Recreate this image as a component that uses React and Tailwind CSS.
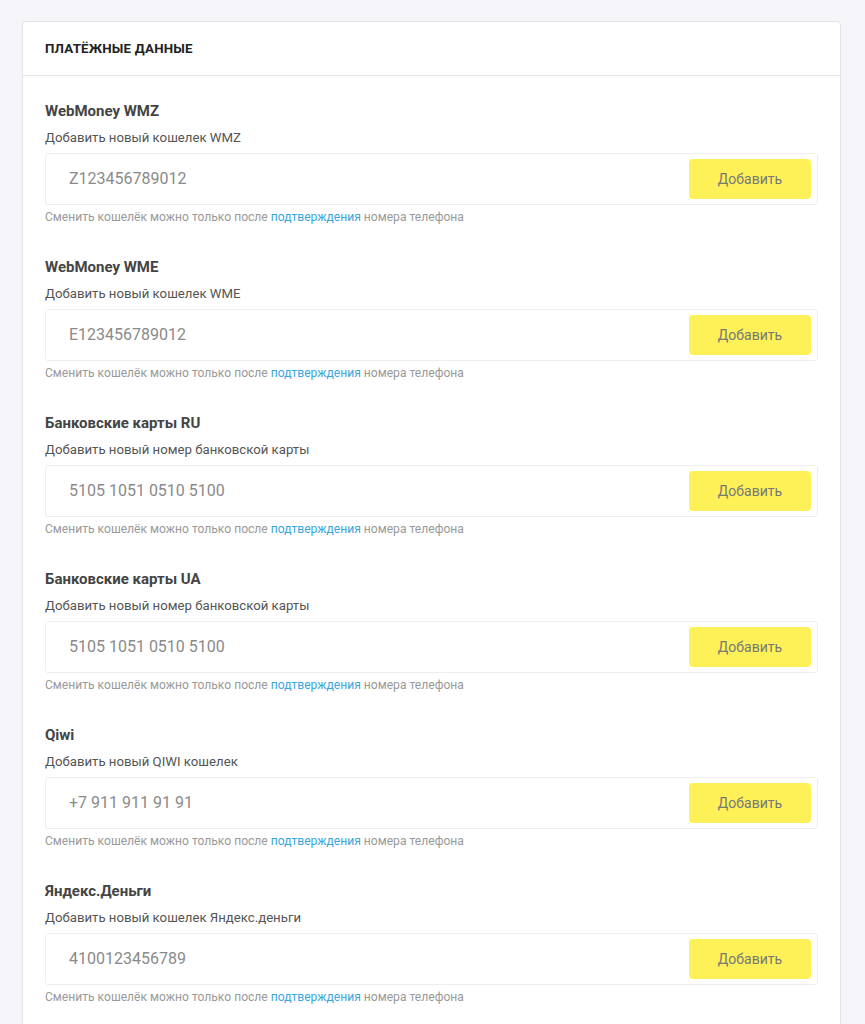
const wallets = [
  { title: 'WebMoney WMZ', label: 'Добавить новый кошелек WMZ', placeholder: 'Z123456789012' },
  { title: 'WebMoney WME', label: 'Добавить новый кошелек WME', placeholder: 'E123456789012' },
  { title: 'Банковские карты RU', label: 'Добавить новый номер банковской карты', placeholder: '5105 1051 0510 5100' },
  { title: 'Банковские карты UA', label: 'Добавить новый номер банковской карты', placeholder: '5105 1051 0510 5100' },
  { title: 'Qiwi', label: 'Добавить новый QIWI кошелек', placeholder: '+7 911 911 91 91' },
  { title: 'Яндекс.Деньги', label: 'Добавить новый кошелек Яндекс.деньги', placeholder: '4100123456789' },
];

function WalletField({ title, label, placeholder }) {
  return (
    <div className="pb-[32px]">
      <h3 className="text-[15px] leading-[20px] font-bold text-[#444]">{title}</h3>
      <p className="mt-[8px] text-[13.2px] leading-[18px] text-[#555]">{label}</p>
      <div className="mt-[6px] h-[52px] flex items-center border border-[#eeeef0] rounded-[3px] bg-white pl-[23px] pr-[6px]">
        <input
          className="flex-1 min-w-0 outline-none text-[16px] text-[#888] placeholder:text-[#8a8a8a] bg-transparent"
          placeholder={placeholder}
        />
        <button className="w-[122px] h-[40px] rounded-[4px] bg-[#fef158] text-[14px] text-[#777]">
          Добавить
        </button>
      </div>
      <p className="mt-[4px] text-[12.1px] leading-[16px] text-[#999]">
        Сменить кошелёк можно только после{' '}
        <a href="#" className="text-[#3aa6dc]">подтверждения</a> номера телефона
      </p>
    </div>
  );
}

export default function App() {
  return (
    <div className="min-h-screen bg-[#f4f4f9] pt-[21px] pl-[22px] pr-[24px] font-['Roboto',sans-serif]">
      <div className="bg-white border border-[#e2e2e8] rounded-[4px]">
        {/* Header */}
        <div className="h-[54px] flex items-center px-[22px] border-b border-[#e6e6ea]">
          <h2 className="text-[13.3px] font-bold text-[#222] tracking-[0.2px]">ПЛАТЁЖНЫЕ ДАННЫЕ</h2>
        </div>

        {/* Wallets */}
        <div className="pt-[25px] pl-[22px] pr-[22px]">
          {wallets.map((w) => (
            <WalletField key={w.title + w.placeholder} {...w} />
          ))}
        </div>
      </div>
    </div>
  );
}
